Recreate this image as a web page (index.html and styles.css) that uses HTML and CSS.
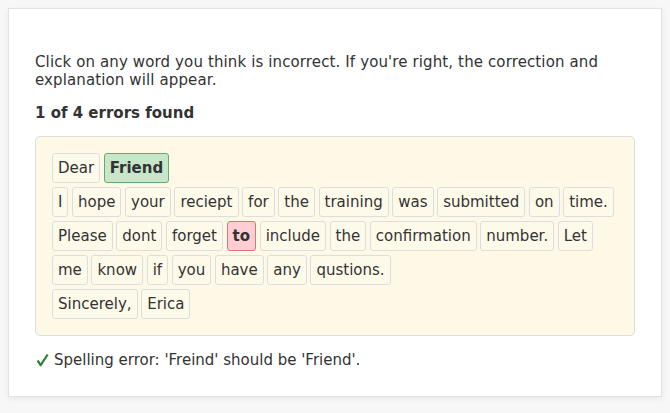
FILE: index.html
```html
<!DOCTYPE html>
<html>
<head>
<meta charset="utf-8">
<link rel="stylesheet" href="styles.css">
</head>
<body>
<div class="card">
  <p class="intro">Click on any word you think is incorrect. If you're right, the correction and explanation will appear.</p>
  <div class="count">1 of 4 errors found</div>
  <div class="passage">
    <div class="line">
      <span class="w">Dear</span><span class="w found">Friend</span>
    </div>
    <div class="line">
      <span class="w">I</span><span class="w">hope</span><span class="w">your</span><span class="w">reciept</span><span class="w">for</span><span class="w">the</span><span class="w">training</span><span class="w">was</span><span class="w">submitted</span><span class="w">on</span><span class="w">time.</span>
      <span class="w">Please</span><span class="w">dont</span><span class="w">forget</span><span class="w wrong">to</span><span class="w">include</span><span class="w">the</span><span class="w">confirmation</span><span class="w">number.</span><span class="w">Let</span>
      <span class="w">me</span><span class="w">know</span><span class="w">if</span><span class="w">you</span><span class="w">have</span><span class="w">any</span><span class="w">qustions.</span>
    </div>
    <div class="line">
      <span class="w">Sincerely,</span><span class="w">Erica</span>
    </div>
  </div>
  <div class="feedback"><svg class="check" width="13" height="14" viewBox="0 0 13 14"><path d="M0.8 8.2 L2.6 6.8 L4.6 10.2 L10.8 1 L12.6 2 L5.2 13.2 L4.0 13.2 Z" fill="#2e7d32"/></svg><span>Spelling error: 'Freind' should be 'Friend'.</span></div>
</div>
</body>
</html>
```

FILE: styles.css
```css
html, body {
  margin: 0;
  padding: 0;
  background: #f7f7f7;
}
body {
  padding: 8px 8px 15px 8px;
  font-family: "DejaVu Sans", Verdana, sans-serif;
  color: #333;
  font-size: 15px;
}
.card {
  background: #fff;
  border: 1px solid #e2e2e2;
  box-shadow: 0 2px 6px rgba(0,0,0,0.06);
  padding: 44px 26px 27px 26px;
}
.intro {
  margin: 0;
  line-height: 18px;
  letter-spacing: 0.12px;
}
.count {
  margin-top: 15px;
  font-weight: bold;
  font-size: 15px;
  line-height: 19px;
}
.passage {
  margin-top: 13px;
  background: #fef9e6;
  border: 1px solid #ddd;
  border-radius: 5px;
  padding: 16px;
  display: flex;
  flex-direction: column;
  gap: 4px;
}
.line {
  display: flex;
  flex-wrap: wrap;
  column-gap: 3.6px;
  row-gap: 4px;
}
.w {
  display: inline-block;
  border: 1px solid #ddd;
  border-radius: 3px;
  padding: 5px 5px;
  line-height: 18px;
  background: #fefaea;
}
.w.found {
  background: #c8e6c9;
  border-color: #6aa86e;
  font-weight: bold;
}
.w.wrong {
  background: #ffcdd2;
  border-color: #e57373;
  font-weight: bold;
}
.feedback {
  margin-top: 15px;
  line-height: 18px;
  display: flex;
  align-items: center;
}
.check {
  margin-left: 1px;
  margin-right: 5px;
  flex: none;
}
```
